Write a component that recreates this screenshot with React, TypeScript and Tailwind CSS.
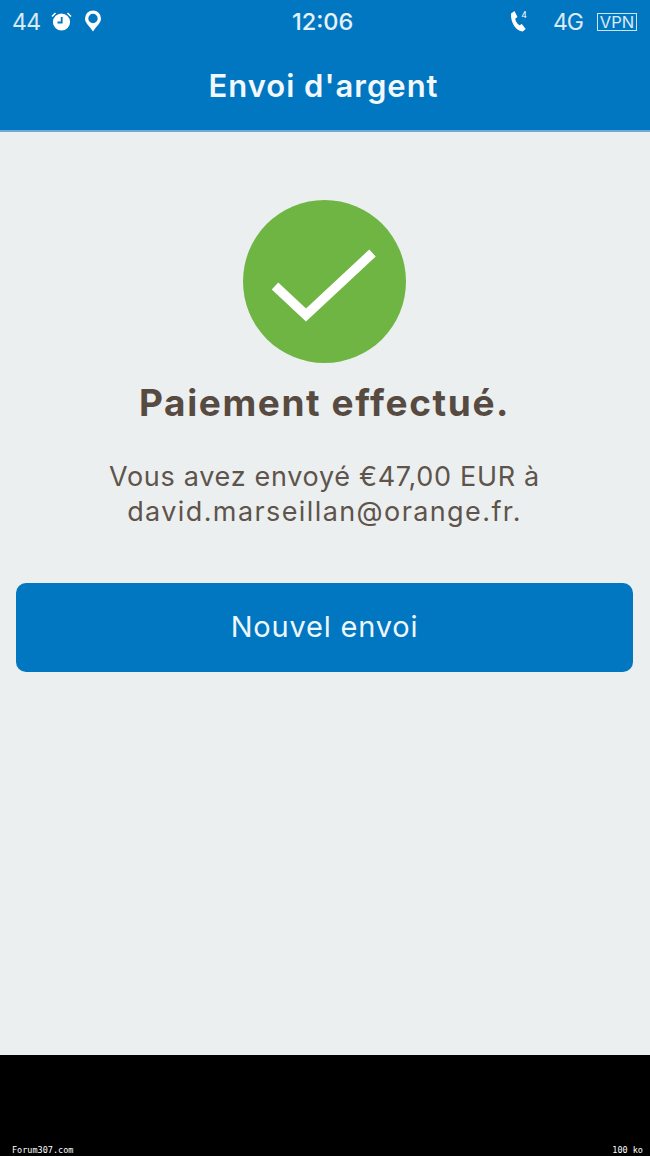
import React from 'react'

function StatusBar() {
    return (
        <div className="h-[44px] relative flex items-center justify-between pl-[12px] pr-[13px] text-white/85 pt-px">
            <div className="flex items-center">
                <span className="text-[23px] leading-none tracking-[-0.5px]">44</span>
                <svg className="ml-[10px] w-[21px] h-[21px] -mt-[3px]" viewBox="0 0 21 21" fill="none">
                    <circle cx="10.5" cy="11" r="8.6" fill="#fff" />
                    <path d="M10.7 6v5.5H6.500" stroke="#0077c0" strokeWidth="1.8" />
                    <path d="M1 5.500 4.500 2M20 5.500 16.500 2" stroke="#fff" strokeWidth="1.6" />
                </svg>
                <svg className="ml-[12px] w-[18px] h-[22px] -mt-[3px]" viewBox="0 0 18 22" fill="none">
                    <path fillRule="evenodd" clipRule="evenodd" d="M9 .5a8 8 0 0 1 8 8c0 4.200-3.600 6.500-8 13-4.400-6.500-8-8.800-8-13a8 8 0 0 1 8-8Zm0 3.300a4.700 4.700 0 1 0 0 9.400 4.700 4.700 0 0 0 0-9.400Z" fill="#fff" />
                </svg>
            </div>
            <span className="absolute left-[292px] top-[9px] text-[23.500px] leading-[26px] font-medium text-white/90">12:06</span>
            <div className="flex items-center">
                <svg className="w-[18px] h-[24px] -mt-[3px]" viewBox="0 0 18 22" fill="#fff">
                    <path d="M1 3.500 4.500 1l3 6-2.300 1.800c.5 2.800 2 5 4.300 6.500l2.300-1.400 3.900 5.200-3 2.400C6.500 21.500.2 12.500 1 3.500Z" />
                    <text x="11.500" y="8" fontSize="9" fontFamily="Roboto, sans-serif" fill="#fff">4</text>
                </svg>
                <span className="ml-[25px] text-[23px] leading-none tracking-[-1px]">4G</span>
                <span className="ml-[14px] w-[40px] h-[18px] border border-white/80 text-[16.500px] leading-[16px] text-center -mt-[2px]">VPN</span>
            </div>
        </div>
    )
}

export default function App() {
    return (
        <div className="w-[650px] h-[1156px] flex flex-col bg-black font-['Inter','Liberation_Sans',sans-serif]">
            <div className="h-[132px] shrink-0 bg-[#0077c0] border-b-2 border-[#6fa8d2]">
                <StatusBar />
                <h1 className="mt-[22px] pr-[3px] text-center text-[31px] leading-[40px] font-semibold tracking-[1px] text-[#f2f8fc]">Envoi d'argent</h1>
            </div>
            <div className="h-[923px] shrink-0 bg-[#ebeff0] flex flex-col items-center pt-[68px] pr-px">
                <div className="w-[163px] h-[163px] rounded-full bg-[#6fb544] flex items-center justify-center">
                    <svg className="w-[163px] h-[163px]" viewBox="0 0 163 163" fill="none">
                        <path d="M32 86 63 115 129.500 53" stroke="#fff" strokeWidth="9.500" />
                    </svg>
                </div>
                <h2 className="mt-[16px] text-[37px] leading-[48px] font-bold tracking-[1.600px] text-[#574a40]">Paiement effectué.</h2>
                <p className="mt-[32px] text-center text-[27px] leading-[35px] tracking-[0.7px] text-[#5f544b]">
                    Vous avez envoyé €47,00 EUR à<br />
                    <span className="tracking-[1.400px]">david.marseillan@orange.fr.</span>
                </p>
                <div className="mt-[54px] w-[617px] h-[89px] pb-[2px] rounded-[10px] bg-[#0077c0] flex items-center justify-center text-[29px] tracking-[0.8px] text-[#eef6fb]">
                    Nouvel envoi
                </div>
            </div>
            <div className="flex-1 flex items-end justify-between pl-[12px] pr-[7px] pb-[1px] font-['DejaVu_Sans_Mono',monospace] text-[8.500px] leading-[10px] text-white">
                <span>Forum307.com</span>
                <span>100 ko</span>
            </div>
        </div>
    )
}
